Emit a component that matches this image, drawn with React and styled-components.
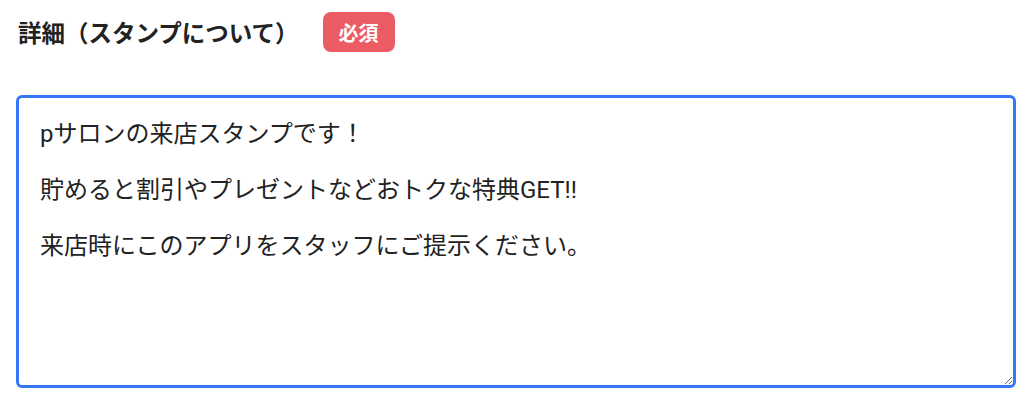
import React from 'react';
import styled, { createGlobalStyle } from 'styled-components';

const GlobalStyle = createGlobalStyle`
  body {
    margin: 0;
    background: #ffffff;
    font-family: Roboto, 'Noto Sans CJK JP', sans-serif;
  }
`;

const blue = '#3478f6';
const red = '#eb5c65';
const black = '#222222';

const description = `pサロンの来店スタンプです！

貯めると割引やプレゼントなどおトクな特典GET!!

来店時にこのアプリをスタッフにご提示ください。`;

const App = () => {
  return (
    <Wrapper>
      <GlobalStyle />
      <LabelRow>
        <Label>詳細（スタンプについて）</Label>
        <RequiredBadge>必須</RequiredBadge>
      </LabelRow>
      <DetailInput defaultValue={description} />
    </Wrapper>
  );
};

const Wrapper = styled.div`
  display: flex;
  flex-direction: column;
  padding: 12px 18px 0 16px;
  width: 1000px;
`;

const LabelRow = styled.div`
  display: flex;
  align-items: center;
  gap: 24px;
  padding-left: 2px;
`;

const Label = styled.div`
  font-size: 23.5px;
  font-weight: 700;
  color: ${black};
`;

const RequiredBadge = styled.div`
  display: flex;
  align-items: center;
  justify-content: center;
  width: 72px;
  height: 40px;
  box-sizing: border-box;
  border-radius: 8px;
  background: ${red};
  color: #ffffff;
  font-size: 20px;
  font-weight: 700;
`;

const DetailInput = styled.textarea`
  margin-top: 43px;
  box-sizing: border-box;
  width: 1000px;
  height: 293px;
  padding: 22px 21px;
  border: 3px solid ${blue};
  border-radius: 6px;
  outline: none;
  resize: both;
  font-family: Roboto, 'Noto Sans CJK JP', sans-serif;
  font-size: 24px;
  line-height: 28px;
  color: ${black};
`;

export default App;
